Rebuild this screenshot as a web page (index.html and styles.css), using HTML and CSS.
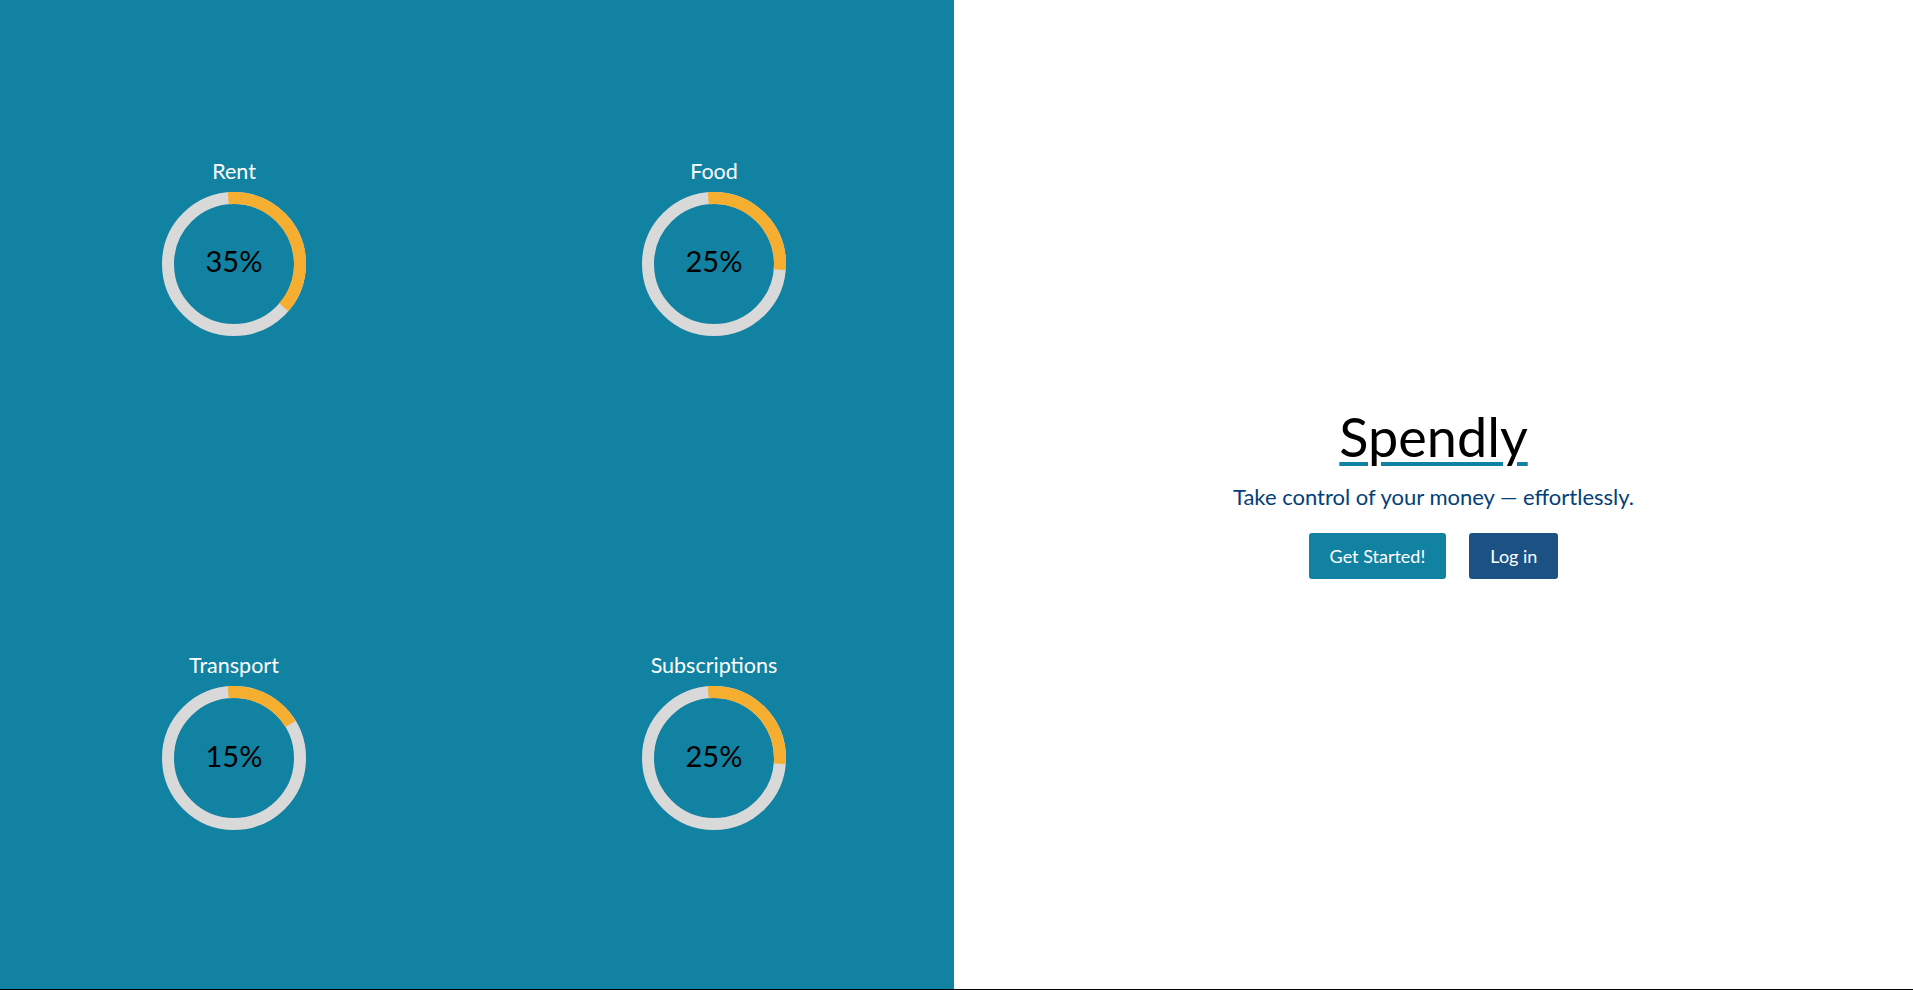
FILE: index.html
```html
<!DOCTYPE html>
<html lang="en">
<head>
<meta charset="utf-8">
<title>Spendly</title>
<link rel="stylesheet" href="styles.css">
</head>
<body>
<div class="page">
  <section class="charts">
    <div class="chart">
      <div class="chart-label">Rent</div>
      <div class="ring">
        <svg width="144" height="144" viewBox="0 0 144 144">
          <circle cx="72" cy="72" r="66" class="track"/>
          <path d="M66.25 6.25 A66 66 0 0 1 121.81 115.30" class="arc"/>
        </svg>
        <span class="pct">35%</span>
      </div>
    </div>
    <div class="chart">
      <div class="chart-label">Food</div>
      <div class="ring">
        <svg width="144" height="144" viewBox="0 0 144 144">
          <circle cx="72" cy="72" r="66" class="track"/>
          <path d="M66.25 6.25 A66 66 0 0 1 137.75 77.75" class="arc"/>
        </svg>
        <span class="pct">25%</span>
      </div>
    </div>
    <div class="chart">
      <div class="chart-label">Transport</div>
      <div class="ring">
        <svg width="144" height="144" viewBox="0 0 144 144">
          <circle cx="72" cy="72" r="66" class="track"/>
          <path d="M66.25 6.25 A66 66 0 0 1 128.57 38.01" class="arc"/>
        </svg>
        <span class="pct">15%</span>
      </div>
    </div>
    <div class="chart">
      <div class="chart-label">Subscriptions</div>
      <div class="ring">
        <svg width="144" height="144" viewBox="0 0 144 144">
          <circle cx="72" cy="72" r="66" class="track"/>
          <path d="M66.25 6.25 A66 66 0 0 1 137.75 77.75" class="arc"/>
        </svg>
        <span class="pct">25%</span>
      </div>
    </div>
  </section>
  <section class="hero">
    <h1 class="brand">Spendly</h1>
    <p class="tagline">Take control of your money — effortlessly.</p>
    <div class="actions">
      <button class="btn btn-primary">Get Started!</button>
      <button class="btn btn-secondary">Log in</button>
    </div>
  </section>
</div>
</body>
</html>
```

FILE: styles.css
```css
* { box-sizing: border-box; }

html, body {
  margin: 0;
  padding: 0;
}

body {
  font-family: "Lato", "Open Sans", sans-serif;
  background: #ffffff;
}

.page {
  display: flex;
  height: 990px;
  border-bottom: 1px solid #000;
}

.charts {
  width: 954px;
  flex: none;
  background: #1282a2;
  display: grid;
  grid-template-columns: 468px 480px;
  grid-template-rows: 1fr 1fr;
  column-gap: 6px;
}

.chart {
  display: flex;
  flex-direction: column;
  align-items: center;
  justify-content: center;
}

.chart-label {
  color: #ffffff;
  font-size: 21.5px;
  line-height: 24px;
  margin-bottom: 9px;
}

.ring {
  position: relative;
  width: 144px;
  height: 144px;
}

.ring svg {
  display: block;
}

.track {
  fill: none;
  stroke: #d9d9d9;
  stroke-width: 12;
}

.arc {
  fill: none;
  stroke: #f5ae2f;
  stroke-width: 12;
}

.pct {
  position: absolute;
  inset: 0;
  display: flex;
  align-items: center;
  justify-content: center;
  padding-bottom: 6px;
  font-size: 29px;
  color: #000;
}

.hero {
  flex: 1;
  display: flex;
  flex-direction: column;
  align-items: center;
  justify-content: center;
  padding-bottom: 8px;
}

.brand {
  margin: 3px 0 14px;
  font-size: 54px;
  font-weight: 400;
  line-height: 1.2;
  color: #000;
  text-decoration: underline;
  text-decoration-color: #1282a2;
  text-decoration-thickness: 4px;
  text-underline-offset: 5px;
}

.tagline {
  margin: 0 0 22px;
  font-size: 22px;
  line-height: 1.2;
  color: #034078;
}

.actions {
  display: flex;
  gap: 23px;
}

.btn {
  font-family: inherit;
  font-size: 18px;
  line-height: 22px;
  padding: 12px 21px;
  border: none;
  border-radius: 3px;
  color: #ffffff;
  cursor: pointer;
}

.btn-primary { background: #1282a2; }
.btn-secondary { background: #1c5283; }
```
